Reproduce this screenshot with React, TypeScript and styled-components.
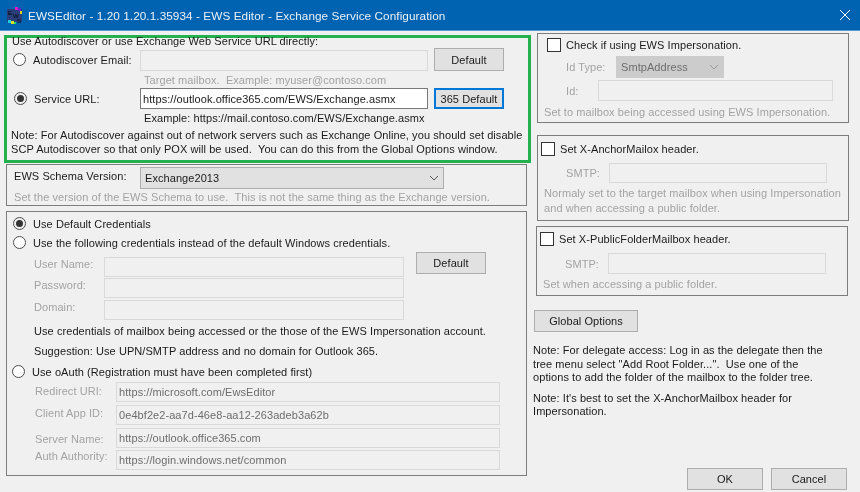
import React from 'react'
import styled, { createGlobalStyle } from 'styled-components'

const GlobalStyle = createGlobalStyle`
  html, body {
    margin: 0;
    padding: 0;
    background: #f0f0f0;
  }
  body {
    font-family: "Liberation Sans", Arial, sans-serif;
    font-size: 11px;
    letter-spacing: 0.07px;
    color: #1a1a1a;
  }
`

const Window = styled.div`
  width: 860px;
  height: 492px;
  display: flex;
  flex-direction: column;
  overflow: hidden;
  background: #f0f0f0;
  filter: blur(0.3px);
`
const TitleBar = styled.div`
  height: 30px;
  flex: none;
  display: flex;
  align-items: center;
  padding: 0 9px 0 6px;
  gap: 5px;
  background: #0063b1;
  border-bottom: 1px solid #5a9bd0;
  color: #fff;
  font-size: 11.75px;
`
const TitleText = styled.span`
  flex: 1;
  color: #e8f1f8;
`
const Body = styled.div`
  flex: 1;
  display: flex;
  min-height: 0;
`
const LeftColumn = styled.div`
  width: 531px;
  flex: none;
  padding: 4px 0 0 4px;
  box-sizing: border-box;
`
const RightColumn = styled.div`
  flex: 1;
  padding: 2px 0 0 5px;
  box-sizing: border-box;
  display: flex;
  flex-direction: column;
`
const GreenBox = styled.div`
  width: 527px;
  height: 128px;
  box-sizing: border-box;
  border: 3px solid #22b14c;
  padding: 0 0 0 2px;
`
const Panel = styled.div<{ $w: number; $h: number; $mt?: number; $ml?: number }>`
  width: ${p => p.$w}px;
  height: ${p => p.$h}px;
  margin-top: ${p => p.$mt ?? 0}px;
  margin-left: ${p => p.$ml ?? 0}px;
  box-sizing: border-box;
  border: 1px solid #7d7d7d;
  flex: none;
`
const Row = styled.div<{ $h: number; $pl?: number }>`
  height: ${p => p.$h}px;
  padding-left: ${p => p.$pl ?? 0}px;
  display: flex;
  align-items: center;
  white-space: pre;
`
const Label = styled.span<{ $w?: number; $off?: boolean; $up?: number }>`
  flex: none;
  width: ${p => (p.$w ? `${p.$w}px` : 'auto')};
  margin-bottom: ${p => (p.$up ?? 0) * 2}px;
  color: ${p => (p.$off ? '#a3a3a3' : '#1a1a1a')};
`
const Hint = styled.span`
  color: #a3a3a3;
`
const RadioMark = styled.span<{ $on?: boolean }>`
  flex: none;
  width: 13px;
  height: 13px;
  box-sizing: border-box;
  border-radius: 50%;
  border: 1px solid #4d4d4d;
  background: ${p => (p.$on ? '#f0f0f0' : '#fff')};
  margin-right: 7px;
  display: flex;
  align-items: center;
  justify-content: center;
  &::after {
    content: '';
    display: ${p => (p.$on ? 'block' : 'none')};
    width: 7px;
    height: 7px;
    border-radius: 50%;
    background: #333;
  }
`
const CheckMark = styled.span`
  flex: none;
  width: 14px;
  height: 14px;
  box-sizing: border-box;
  border: 1px solid #333;
  background: #fff;
  margin-right: 5px;
`
const Field = styled.div<{ $w: number; $live?: boolean; $h?: number }>`
  flex: none;
  width: ${p => p.$w}px;
  height: ${p => (p.$h ? `${p.$h}px` : '100%')};
  align-self: flex-end;
  box-sizing: border-box;
  border: 1px solid ${p => (p.$live ? '#7a7a7a' : '#d9d9d9')};
  background: ${p => (p.$live ? '#fff' : '#f0f0f0')};
  color: ${p => (p.$live ? '#1a1a1a' : '#6d6d6d')};
  padding-left: 2px;
  display: flex;
  align-items: center;
`
const Button = styled.div<{ $w: number; $h?: number; $focus?: boolean; $ml?: number; $mt?: number }>`
  flex: none;
  width: ${p => p.$w}px;
  height: ${p => p.$h ?? 22}px;
  margin-left: ${p => p.$ml ?? 0}px;
  margin-top: ${p => p.$mt ?? 0}px;
  box-sizing: border-box;
  border: ${p => (p.$focus ? '2px solid #0078d7' : '1px solid #adadad')};
  background: #e1e1e1;
  display: flex;
  align-items: center;
  justify-content: center;
`
const RaisedButton = styled(Button)`
  align-self: flex-start;
  margin-top: -5px;
`
const Select = styled.div<{ $w: number; $off?: boolean }>`
  flex: none;
  width: ${p => p.$w}px;
  height: 100%;
  box-sizing: border-box;
  border: 1px solid ${p => (p.$off ? '#cccccc' : '#adadad')};
  background: ${p => (p.$off ? '#cccccc' : '#e1e1e1')};
  color: ${p => (p.$off ? '#6d6d6d' : '#1a1a1a')};
  padding: 0 4px 0 4px;
  display: flex;
  align-items: center;
  justify-content: space-between;
`
const NoteBlock = styled.div<{ $mt?: number; $ml?: number }>`
  margin-top: ${p => p.$mt ?? 0}px;
  margin-left: ${p => p.$ml ?? 0}px;
  line-height: 13.5px;
  white-space: pre;
`
const Footer = styled.div`
  margin-top: auto;
  padding: 0 0 2px 151px;
  display: flex;
  gap: 8px;
`

const Chevron = ({ color = '#555' }: { color?: string }) => (
  <svg width='10' height='6' viewBox='0 0 10 6'>
    <path d='M1 1l4 4 4-4' fill='none' stroke={color} strokeWidth='1' />
  </svg>
)

const AppIcon = () => (
  <svg width='17' height='17' viewBox='0 0 17 17' style={{ flex: 'none' }}>
    <rect x='1' y='2' width='15' height='13' fill='#2a3f7a' />
    <rect x='9' y='0' width='3' height='3' fill='#d020c0' />
    <rect x='12' y='1' width='3' height='3' fill='#6a20d0' />
    <rect x='14' y='4' width='2' height='3' fill='#e0d020' />
    <rect x='2' y='13' width='3' height='3' fill='#20d0e0' />
    <rect x='5' y='14' width='3' height='3' fill='#e0e020' />
    <rect x='8' y='15' width='2' height='2' fill='#20e060' />
    <text x='2' y='8' fontSize='6' fill='#000' fontFamily='Liberation Sans'>E</text>
    <text x='7' y='11' fontSize='6' fill='#000' fontFamily='Liberation Sans'>W</text>
    <text x='11' y='16' fontSize='6' fill='#000' fontFamily='Liberation Sans'>S</text>
  </svg>
)

const CloseIcon = () => (
  <svg width='12' height='12' viewBox='0 0 12 12'>
    <path d='M1 1l10 10M11 1L1 11' stroke='#fff' strokeWidth='1' />
  </svg>
)

const App: React.FC = () => (
  <Window>
    <GlobalStyle />
    <TitleBar>
      <AppIcon />
      <TitleText>EWSEditor - 1.20 1.20.1.35934 - EWS Editor - Exchange Service Configuration</TitleText>
      <CloseIcon />
    </TitleBar>
    <Body>
      <LeftColumn>
        <GreenBox>
          <Row $h={6} $pl={3}>Use Autodiscover or use Exchange Web Service URL directly:</Row>
          <Row $h={4} />
          <Row $h={23} $pl={4}>
            <RadioMark /><Label $w={107}>Autodiscover Email:</Label>
            <Field $w={288} $h={21} />
            <Button $w={70} $h={23} $ml={6}>Default</Button>
          </Row>
          <Row $h={17} $pl={135}><Hint>Target mailbox.  Example: myuser@contoso.com</Hint></Row>
          <Row $h={21} $pl={5}>
            <RadioMark $on /><Label $w={106}>Service URL:</Label>
            <Field $w={288} $live>https://outlook.office365.com/EWS/Exchange.asmx</Field>
            <Button $w={70} $h={21} $ml={6} $focus>365 Default</Button>
          </Row>
          <Row $h={18} $pl={135}>Example: https://mail.contoso.com/EWS/Exchange.asmx</Row>
          <NoteBlock $mt={2} $ml={2}>{'Note: For Autodiscover against out of network servers such as Exchange Online, you should set disable\nSCP Autodiscover so that only POX will be used.  You can do this from the Global Options window.'}</NoteBlock>
        </GreenBox>
        <Panel $w={521} $h={42} $mt={1} $ml={2}>
          <Row $h={2} />
          <Row $h={22} $pl={7}>
            <Label $w={126} $up={2}>EWS Schema Version:</Label>
            <Select $w={304}>Exchange2013<Chevron /></Select>
          </Row>
          <Row $h={15} $pl={7}><Hint>Set the version of the EWS Schema to use.  This is not the same thing as the Exchange version.</Hint></Row>
        </Panel>
        <Panel $w={521} $h={265} $mt={5} $ml={2}>
          <Row $h={3} />
          <Row $h={17} $pl={6}><RadioMark $on />Use Default Credentials</Row>
          <Row $h={21} $pl={6}><RadioMark />Use the following credentials instead of the default Windows credentials.</Row>
          <Row $h={4} />
          <Row $h={20} $pl={27}>
            <Label $w={70} $off $up={3}>User Name:</Label>
            <Field $w={300} />
            <RaisedButton $w={70} $ml={12}>Default</RaisedButton>
          </Row>
          <Row $h={1} />
          <Row $h={20} $pl={27}><Label $w={70} $off $up={3}>Password:</Label><Field $w={300} /></Row>
          <Row $h={2} />
          <Row $h={20} $pl={27}><Label $w={70} $off $up={3}>Domain:</Label><Field $w={300} /></Row>
          <Row $h={21} $pl={27}>Use credentials of mailbox being accessed or the those of the EWS Impersonation account.</Row>
          <Row $h={20} $pl={27}>Suggestion: Use UPN/SMTP address and no domain for Outlook 365.</Row>
          <Row $h={21} $pl={5}><RadioMark />Use oAuth (Registration must have been completed first)</Row>
          <Row $h={20} $pl={28}><Label $w={81} $off $up={1}>Redirect URI:</Label><Field $w={384}>https://microsoft.com/EwsEditor</Field></Row>
          <Row $h={3} />
          <Row $h={20} $pl={28}><Label $w={81} $off $up={2}>Client App ID:</Label><Field $w={384}>0e4bf2e2-aa7d-46e8-aa12-263adeb3a62b</Field></Row>
          <Row $h={3} />
          <Row $h={20} $pl={28}><Label $w={81} $off $up={-1}>Server Name:</Label><Field $w={384}>https://outlook.office365.com</Field></Row>
          <Row $h={2} />
          <Row $h={20} $pl={28}><Label $w={81} $off $up={4}>Auth Authority:</Label><Field $w={384}>https://login.windows.net/common</Field></Row>
        </Panel>
      </LeftColumn>
      <RightColumn>
        <Panel $w={312} $h={90} $ml={1}>
          <Row $h={22} $pl={9}><CheckMark />Check if using EWS Impersonation.</Row>
          <Row $h={22} $pl={28}>
            <Label $w={50} $off>Id Type:</Label>
            <Select $w={108} $off>SmtpAddress<Chevron color='#999' /></Select>
          </Row>
          <Row $h={2} />
          <Row $h={21} $pl={28}><Label $w={32} $off>Id:</Label><Field $w={235} /></Row>
          <Row $h={21} $pl={6}><Hint>Set to mailbox being accessed using EWS Impersonation.</Hint></Row>
        </Panel>
        <Panel $w={312} $h={86} $mt={12} $ml={1}>
          <Row $h={25} $pl={3}><CheckMark />Set X-AnchorMailox header.</Row>
          <Row $h={2} />
          <Row $h={20} $pl={28}><Label $w={43} $off>SMTP:</Label><Field $w={218} /></Row>
          <Row $h={3} />
          <Row $h={14} $pl={6}><Hint>Normaly set to the target mailbox when using Impersonation</Hint></Row>
          <Row $h={15} $pl={6}><Hint>and when accessing a public folder.</Hint></Row>
        </Panel>
        <Panel $w={312} $h={70} $mt={5}>
          <Row $h={24} $pl={3}><CheckMark />Set X-PublicFolderMailbox header.</Row>
          <Row $h={2} />
          <Row $h={21} $pl={28}><Label $w={43} $off>SMTP:</Label><Field $w={218} /></Row>
          <Row $h={20} $pl={6}><Hint>Set when accessing a public folder.</Hint></Row>
        </Panel>
        <Button $w={104} $h={22} $ml={-2} $mt={14}>Global Options</Button>
        <NoteBlock $mt={12} $ml={-3}>{'Note: For delegate access: Log in as the delegate then the\ntree menu select "Add Root Folder...".  Use one of the\noptions to add the folder of the mailbox to the folder tree.'}</NoteBlock>
        <NoteBlock $mt={7} $ml={-3}>{"Note: It's best to set the X-AnchorMailbox header for\nImpersonation."}</NoteBlock>
        <Footer>
          <Button $w={76}>OK</Button>
          <Button $w={76}>Cancel</Button>
        </Footer>
      </RightColumn>
    </Body>
  </Window>
)

export default App
